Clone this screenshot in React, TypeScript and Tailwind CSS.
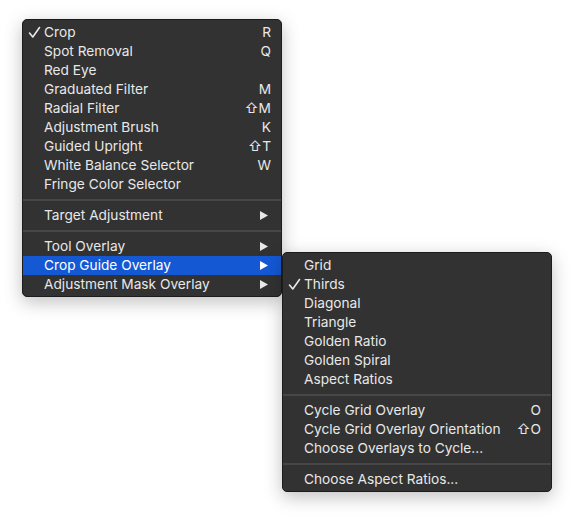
import React from "react";

type Item =
  | { sep: true }
  | { sep?: false; label: string; check?: boolean; key?: string; sub?: boolean; active?: boolean };

const menu1: Item[] = [
  { label: "Crop", check: true, key: "R" },
  { label: "Spot Removal", key: "Q" },
  { label: "Red Eye" },
  { label: "Graduated Filter", key: "M" },
  { label: "Radial Filter", key: "⇧M" },
  { label: "Adjustment Brush", key: "K" },
  { label: "Guided Upright", key: "⇧T" },
  { label: "White Balance Selector", key: "W" },
  { label: "Fringe Color Selector" },
  { sep: true },
  { label: "Target Adjustment", sub: true },
  { sep: true },
  { label: "Tool Overlay", sub: true },
  { label: "Crop Guide Overlay", sub: true, active: true },
  { label: "Adjustment Mask Overlay", sub: true },
];

const menu2: Item[] = [
  { label: "Grid" },
  { label: "Thirds", check: true },
  { label: "Diagonal" },
  { label: "Triangle" },
  { label: "Golden Ratio" },
  { label: "Golden Spiral" },
  { label: "Aspect Ratios" },
  { sep: true },
  { label: "Cycle Grid Overlay", key: "O" },
  { label: "Cycle Grid Overlay Orientation", key: "⇧O" },
  { label: "Choose Overlays to Cycle..." },
  { sep: true },
  { label: "Choose Aspect Ratios..." },
];

function Arrow() {
  return (
    <svg width="8" height="9" viewBox="0 0 8 9" className="block">
      <path d="M0 0 L8 4.5 L0 9 Z" fill="currentColor" />
    </svg>
  );
}

function Menu({ items, className }: { items: Item[]; className?: string }) {
  return (
    <div
      className={
        "rounded-[5px] bg-[#323232] border border-[#1c1c1c] pt-[3px] pb-[2px] text-[13.7px] leading-[19px] text-[#e8e8e8] shadow-[0_5px_18px_rgba(0,0,0,0.25)] " +
        (className ?? "")
      }
      style={{ fontFamily: "Inter, 'Noto Sans', 'DejaVu Sans', sans-serif" }}
    >
      {items.map((it, i) =>
        it.sep ? (
          <div key={i} className="h-[12px] flex items-center">
            <div className="h-[2px] w-full bg-[#474747]" />
          </div>
        ) : (
          <div
            key={i}
            className={
              "h-[19px] flex items-center pr-[10px] " +
              (it.active ? "bg-[#1458d4] text-white" : "")
            }
          >
            <div className="w-[21px] pl-[5px] flex items-center">
              {it.check ? (
                <svg width="13" height="13" viewBox="0 0 13 13" className="block">
                  <path d="M1.5 7 L4.8 11 L11.5 1.5" fill="none" stroke="currentColor" strokeWidth="1.6" strokeLinecap="round" strokeLinejoin="round" />
                </svg>
              ) : null}
            </div>
            <div className="flex-1 whitespace-nowrap -translate-y-[0.5px]">{it.label}</div>
            {it.key ? <div className="whitespace-nowrap -translate-y-[0.5px]">{it.key}</div> : null}
            {it.sub ? (
              <div className="pr-[3px]">
                <Arrow />
              </div>
            ) : null}
          </div>
        )
      )}
    </div>
  );
}

export default function App() {
  return (
    <div className="relative w-[574px] h-[520px] bg-white overflow-hidden">
      <div className="pl-[22px] pt-[19px]">
        <Menu items={menu1} className="w-[260px]" />
      </div>
      <Menu items={menu2} className="absolute left-[282px] top-[252px] w-[270px]" />
    </div>
  );
}
